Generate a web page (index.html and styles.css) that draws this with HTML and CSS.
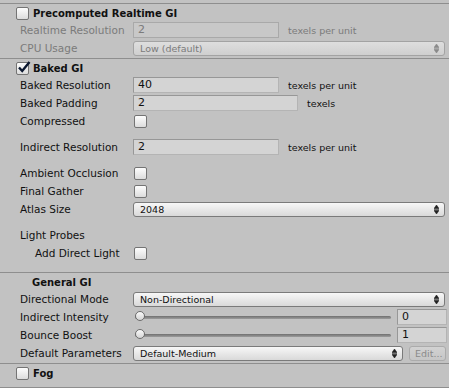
FILE: index.html
```html
<!DOCTYPE html>
<html lang="en">
  <head>
    <meta charset="UTF-8" />
    <title>Lighting</title>
    <link rel="stylesheet" href="styles.css">
  </head>
  <body>
    <div class="inspector">
      <!-- Precomputed Realtime GI -->
      <div class="section">
        <div class="header">
          <span class="check"></span>
          <span class="title">Precomputed Realtime GI</span>
        </div>
        <div class="row disabled">
          <span class="label">Realtime Resolution</span>
          <span class="field short">2</span>
          <span class="unit">texels per unit</span>
        </div>
        <div class="row disabled">
          <span class="label">CPU Usage</span>
          <span class="popup wide">Low (default)<svg class="arrows" width="5" height="9" viewBox="0 0 5 9"><path d="M2.5 0 L5 3.5 L0 3.5 Z M0 4.5 H5 M2.5 9 L5 5.5 L0 5.5 Z" /></svg></span>
        </div>
      </div>

      <!-- Baked GI -->
      <div class="section baked">
        <div class="header">
          <span class="check on">
            <svg width="14" height="13" viewBox="0 0 14 13"><path d="M2 6.5 L5.2 10 L12.5 1" /></svg>
          </span>
          <span class="title">Baked GI</span>
        </div>
        <div class="row">
          <span class="label">Baked Resolution</span>
          <span class="field short">40</span>
          <span class="unit">texels per unit</span>
        </div>
        <div class="row">
          <span class="label">Baked Padding</span>
          <span class="field medium">2</span>
          <span class="unit">texels</span>
        </div>
        <div class="row">
          <span class="label">Compressed</span>
          <span class="check"></span>
        </div>
        <div class="spacer"></div>
        <div class="row">
          <span class="label">Indirect Resolution</span>
          <span class="field short">2</span>
          <span class="unit">texels per unit</span>
        </div>
        <div class="spacer"></div>
        <div class="row">
          <span class="label">Ambient Occlusion</span>
          <span class="check"></span>
        </div>
        <div class="row">
          <span class="label">Final Gather</span>
          <span class="check"></span>
        </div>
        <div class="row">
          <span class="label">Atlas Size</span>
          <span class="popup wide">2048<svg class="arrows" width="5" height="9" viewBox="0 0 5 9"><path d="M2.5 0 L5 3.5 L0 3.5 Z M0 4.5 H5 M2.5 9 L5 5.5 L0 5.5 Z" /></svg></span>
        </div>
        <div class="spacer"></div>
        <div class="row">
          <span class="label">Light Probes</span>
        </div>
        <div class="row indent">
          <span class="label">Add Direct Light</span>
          <span class="check"></span>
        </div>
      </div>

      <!-- General GI -->
      <div class="section">
        <div class="header plain">
          <span class="title">General GI</span>
        </div>
        <div class="row">
          <span class="label">Directional Mode</span>
          <span class="popup wide">Non-Directional<svg class="arrows" width="5" height="9" viewBox="0 0 5 9"><path d="M2.5 0 L5 3.5 L0 3.5 Z M0 4.5 H5 M2.5 9 L5 5.5 L0 5.5 Z" /></svg></span>
        </div>
        <div class="row">
          <span class="label">Indirect Intensity</span>
          <span class="slider"><span class="thumb"></span></span>
          <span class="field number">0</span>
        </div>
        <div class="row">
          <span class="label">Bounce Boost</span>
          <span class="slider"><span class="thumb"></span></span>
          <span class="field number">1</span>
        </div>
        <div class="row">
          <span class="label">Default Parameters</span>
          <span class="popup params">Default-Medium<svg class="arrows" width="5" height="9" viewBox="0 0 5 9"><path d="M2.5 0 L5 3.5 L0 3.5 Z M0 4.5 H5 M2.5 9 L5 5.5 L0 5.5 Z" /></svg></span>
          <span class="button">Edit...</span>
        </div>
      </div>

      <!-- Fog -->
      <div class="section fog">
        <div class="header">
          <span class="check"></span>
          <span class="title">Fog</span>
        </div>
      </div>
    </div>
  </body>
</html>
```

FILE: styles.css
```css
body {
  margin: 0;
  background-color: #c2c2c2;
  font-family: "DejaVu Sans", sans-serif;
  font-size: 10.5px;
  color: #111;
}

.inspector {
  width: 449px;
  height: 385px;
  box-sizing: border-box;
  border-top: 1px solid #8e8e8e;
  margin-top: 3px;
  overflow: hidden;
}

.section {
  border-bottom: 1px solid #8e8e8e;
  padding-bottom: 2px;
}

.section.baked {
  padding-bottom: 11px;
}

.section.fog {
  padding-bottom: 5px;
}

.header {
  display: flex;
  align-items: center;
  height: 18px;
  padding-left: 16px;
  gap: 4px;
}

.header.plain {
  padding-left: 32px;
}

.title {
  font-weight: bold;
  font-size: 10px;
}

.row {
  display: flex;
  align-items: center;
  height: 16px;
  margin-top: 2px;
  padding-left: 20px;
}

.header + .row {
  margin-top: 0;
}

.row.indent {
  padding-left: 35px;
}

.row.indent .label {
  width: 98px;
}

.label {
  width: 113px;
  flex-shrink: 0;
  white-space: nowrap;
}

.disabled .label,
.disabled .unit {
  color: #7b7b7b;
}

.spacer {
  height: 8px;
}

.check {
  position: relative;
  width: 11px;
  height: 11px;
  border: 1px solid #747474;
  border-radius: 2px;
  background: linear-gradient(#fdfdfd, #dcdcdc);
  flex-shrink: 0;
}

.row .check {
  margin-left: 1px;
}

.check.on svg {
  position: absolute;
  left: 0;
  top: -2px;
  fill: none;
  stroke: #0c1830;
  stroke-width: 2.4;
}

.field {
  height: 14px;
  line-height: 14px;
  box-sizing: content-box;
  padding-left: 4px;
  border: 1px solid #979797;
  border-bottom-color: #b4b4b4;
  border-right-color: #b4b4b4;
  background-color: #d4d4d4;
  font-size: 11px;
}

.field.short {
  width: 140px;
}

.field.medium {
  width: 159px;
}

.field.number {
  width: 44px;
  margin-left: 6px;
}

.disabled .field {
  background-color: #c8c8c8;
  border-color: #a9a9a9;
  color: #7b7b7b;
}

.unit {
  margin-left: 9px;
  font-size: 9.5px;
  white-space: nowrap;
}

.popup {
  position: relative;
  height: 13px;
  line-height: 13px;
  padding-left: 6px;
  border: 1px solid #7a7a7a;
  border-radius: 3px;
  background: linear-gradient(#f7f7f7, #d9d9d9);
  font-size: 9.5px;
}

.popup.wide {
  width: 304px;
}

.popup.params {
  width: 262px;
}

.disabled .popup {
  border-color: #a3a3a3;
  background: linear-gradient(#dedede, #cfcfcf);
  color: #7b7b7b;
}

.arrows {
  position: absolute;
  right: 5px;
  top: 2px;
  fill: #222;
  stroke: #222;
  stroke-width: 0.6;
}

.disabled .arrows {
  fill: #8a8a8a;
  stroke: #8a8a8a;
}

.slider {
  position: relative;
  width: 256px;
  height: 3px;
  margin-left: 2px;
  border-radius: 2px;
  background: linear-gradient(#6f6f6f, #9c9c9c);
}

.thumb {
  position: absolute;
  left: 0;
  top: -5px;
  width: 10px;
  height: 10px;
  border: 1px solid #6c6c6c;
  border-radius: 50%;
  background: linear-gradient(#fafafa, #d4d4d4);
  box-sizing: border-box;
}

.button {
  height: 13px;
  line-height: 13px;
  width: 30px;
  margin-left: 6px;
  padding-left: 5px;
  border: 1px solid #ababab;
  border-radius: 3px;
  background: linear-gradient(#d2d2d2, #c6c6c6);
  color: #8a8a8a;
  font-size: 9.5px;
}
```
